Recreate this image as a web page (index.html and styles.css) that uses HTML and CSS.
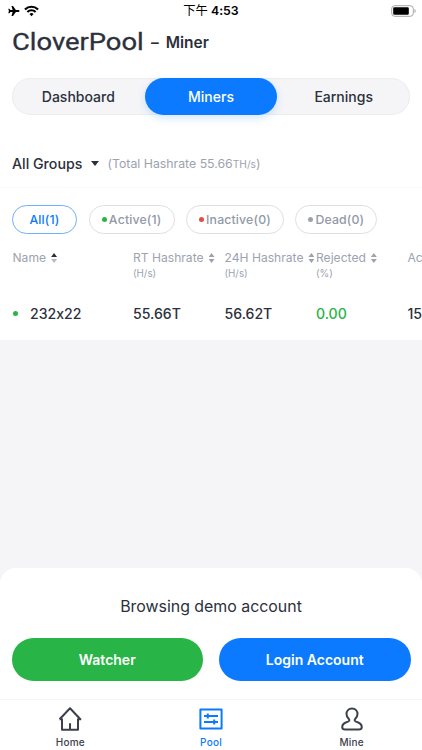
FILE: index.html
```html
<!DOCTYPE html>
<html lang="en">
<head>
<meta charset="utf-8">
<title>CloverPool – Miner</title>
<link rel="stylesheet" href="styles.css">
</head>
<body>
<div class="app">
  <header class="status">
    <div class="signals">
      <svg width="12" height="12" viewBox="0 0 12 12"><path d="M11.500 6c0-.6-.7-1-1.400-1H7.900L5 1H3.500l1.100 4H2.500L1.300 3.700H.3L.9 6 .3 8.300h1L2.500 7h2.100L3.500 11H5l2.900-4h2.200c.7 0 1.400-.4 1.400-1z"/></svg>
      <svg width="15" height="12" viewBox="0 0 16 12" fill="none" stroke="#000" stroke-width="2.300"><path d="M1 4.300a10 10 0 0 1 14 0M3.600 7a6.200 6.200 0 0 1 8.800 0"/><path d="M8 11.500L5.800 9.200a3.200 3.200 0 0 1 4.400 0z" fill="#000" stroke="none"/></svg>
    </div>
    <div class="time"><span class="period">下午</span> 4:53</div>
    <svg class="battery" width="26" height="12" viewBox="0 0 26 12"><rect x="1.700" y=".7" width="21.600" height="10.600" rx="3" fill="none" stroke="#a5a5a5"/><rect x="3.200" y="2.200" width="15.600" height="7.600" rx="1.300"/><path d="M24.600 4c1.300.6 1.300 3.400 0 4z" fill="#8d8d8d"/></svg>
  </header>
  <h1 class="title"><span class="brand"><span class="wordmark">CloverPool</span></span><span class="section">– Miner</span></h1>
  <nav class="tabs"><a>Dashboard</a><a class="active">Miners</a><a>Earnings</a></nav>
  <div class="group"><span class="group-name">All Groups</span><i class="caret"></i><span class="total">(Total Hashrate 55.66<small>TH/s</small>)</span></div>
  <div class="filters">
    <span class="chip chip-all">All(1)</span>
    <span class="chip chip-active"><i class="dot green"></i>Active(1)</span>
    <span class="chip chip-inactive"><i class="dot red"></i>Inactive(0)</span>
    <span class="chip chip-dead"><i class="dot gray"></i>Dead(0)</span>
  </div>
  <section class="table">
    <div class="row head">
      <div><span class="label">Name</span><i class="sort asc"></i></div>
      <div><span class="label">RT Hashrate</span><i class="sort"></i><small>(H/s)</small></div>
      <div><span class="label">24H Hashrate</span><i class="sort"></i><small>(H/s)</small></div>
      <div><span class="label">Rejected</span><i class="sort"></i><small>(%)</small></div>
      <div><span class="label">Ac</span></div>
    </div>
    <div class="row data">
      <div class="miner"><i class="dot green"></i>232x22</div><div>55.66T</div><div>56.62T</div><div class="ok">0.00</div><div>15</div>
    </div>
  </section>
  <main class="blank"></main>
  <section class="sheet">
    <p>Browsing demo account</p>
    <div class="actions"><button class="watcher">Watcher</button><button class="login">Login Account</button></div>
  </section>
  <nav class="bottom">
    <a><svg width="26" height="26" viewBox="0 0 26 26"><path d="M5 12.500V23.800H21V12.500M13 23.500v-6.200M2.600 13.200L13 2.200l10.400 11H21M2.600 13.200H5"/></svg><span>Home</span></a>
    <a class="current"><svg width="26" height="26" viewBox="0 0 26 26"><path d="M2.400 3.400H23.600V22.400H2.400zM6 10H20M9.800 7.500v5M6 16H20M16.200 13.500v5"/></svg><span>Pool</span></a>
    <a><svg width="26" height="26" viewBox="0 0 26 26"><path d="M13 2.500c-3.400 0-5.500 2.400-5.500 5.600 0 2.300 1.100 4 2.500 5.200.7 1.100.2 1.800-1 2.300-3.300 1.200-5.800 2.100-5.800 5.300 0 1.600 1 2.500 3 2.500h13.600c2 0 3-.9 3-2.500 0-3.200-2.500-4.100-5.800-5.300-1.200-.5-1.700-1.200-1-2.300 1.400-1.200 2.500-2.900 2.500-5.200 0-3.200-2.100-5.600-5.500-5.600z"/></svg><span>Mine</span></a>
  </nav>
</div>
</body>
</html>
```
FILE: styles.css
```css
* { box-sizing: border-box; }
body { margin: 0; font-family: Inter, "Noto Sans CJK SC", sans-serif; font-feature-settings: "calt" 0; color: #2b303b; background: #fff; }
.app { width: 422px; height: 750px; display: flex; flex-direction: column; overflow: hidden; background: #fff; }
.status { height: 22px; padding: 0 6px 0 8px; display: grid; grid-template-columns: 1fr auto 1fr; align-items: center; color: #000; }
.signals { display: flex; gap: 4px; align-items: center; }
.time { font-size: 12.3px; font-weight: 600; line-height: 22px; margin-right: 2px; }
.period { font-weight: 400; }
.battery { justify-self: end; }
.title { height: 56px; margin: 0; padding: 7px 12px 0; display: flex; align-items: flex-start; line-height: 27px; }
.brand { width: 139px; height: 27px; }
.wordmark { display: block; width: max-content; font: 400 23px/27px Roboto, sans-serif; transform-origin: left; transform: scaleX(1.19); white-space: nowrap; -webkit-text-stroke: .3px #2b303b; }
.section { font-size: 15.5px; font-weight: 600; word-spacing: 3px; }
.tabs { height: 37px; margin: 0 12px; display: grid; grid-template-columns: repeat(3, 1fr); border-radius: 19px; background: #f5f5f7; box-shadow: inset 0 0 0 1px #ededf0; }
.tabs a { display: grid; place-items: center; border-radius: 19px; font-size: 14px; font-weight: 500; }
.tabs .active { background: #0b7aff; color: #fff; box-shadow: 0 3px 8px #0b7aff30; }
.group { height: 73px; padding: 24px 12px 0; display: flex; align-items: center; border-bottom: 1px solid #f8f8f9; white-space: nowrap; }
.group-name { width: 79px; font-size: 14.2px; font-weight: 500; }
.caret { border: 4.5px solid transparent; border-top: 5.5px solid #2b303b; border-bottom: 0; }
.total { margin-left: 8.5px; color: #9ca3af; font-size: 12.3px; }
.total small { font-size: 10.2px; }
.filters { height: 46px; padding: 17px 12px 0; display: flex; gap: 11.7px; }
.chip { height: 29px; border: 1px solid #dedfe3; border-radius: 15px; display: flex; align-items: center; justify-content: center; color: #9299a7; font-size: 12.3px; font-weight: 500; letter-spacing: .15px; white-space: nowrap; }
.chip-all { width: 65px; color: #0b7aff; border-color: #70aff9; }
.chip-active { width: 86px; }
.chip-inactive { width: 97.3px; }
.chip-dead { width: 82px; }
.dot { width: 5px; height: 5px; border-radius: 50%; margin-right: 2px; flex: none; }
.green { background: #28b446; }
.red { background: #e54d42; }
.gray { background: #9ca3af; }
.table { height: 106px; padding-left: 12.5px; overflow: hidden; }
.row { display: grid; grid-template-columns: 120.5px 91.5px 91.5px 91.5px 14px; white-space: nowrap; }
.head { height: 52px; padding-top: 16px; font-size: 12.1px; line-height: 16px; color: #9ca3af; }
.head small { display: block; font-size: 9.8px; line-height: 15px; }
.sort { display: inline-block; width: 6px; height: 10px; margin-left: 5px; vertical-align: -1px; background: #9ca3af; clip-path: polygon(50% 0, 100% 40%, 0 40%, 0 60%, 100% 60%, 50% 100%, 0 60%, 0 40%); }
.sort.asc { background: linear-gradient(#2b303b 50%, #b6bac2 50%); }
.data { height: 54px; align-items: center; font-size: 14.1px; font-weight: 500; }
.miner { display: flex; align-items: center; }
.miner .dot { margin-right: 12.5px; }
.ok { color: #28b446; }
.blank { flex: 1; background: #f5f5f7; }
.sheet { height: 131.5px; padding-top: 25px; background: #fff; border-radius: 16px 16px 0 0; box-shadow: 0 0 0 16px #f5f5f7; clip-path: inset(0); }
.sheet p { margin: 0; text-align: center; font-size: 15.9px; line-height: 27px; }
.actions { margin: 18.5px 11.5px 0; display: grid; grid-template-columns: 1fr 1fr; gap: 16px; }
.actions button { height: 42.5px; border: 0; border-radius: 22px; color: #fff; font: 600 14px Inter, sans-serif; }
.actions .watcher { background: #28b446; }
.actions .login { background: #0b7aff; }
.bottom { height: 51px; border-top: 1px solid #f5f5f6; display: grid; grid-template-columns: repeat(3, 1fr); }
.bottom a { display: flex; flex-direction: column; align-items: center; padding-top: 6px; font-size: 10px; font-weight: 500; line-height: 14px; letter-spacing: .2px; color: #3b404b; }
.bottom span { margin-top: 3px; }
.bottom svg { fill: none; stroke: currentColor; stroke-width: 2; stroke-linejoin: round; }
.bottom .current { color: #0b7aff; }
```
